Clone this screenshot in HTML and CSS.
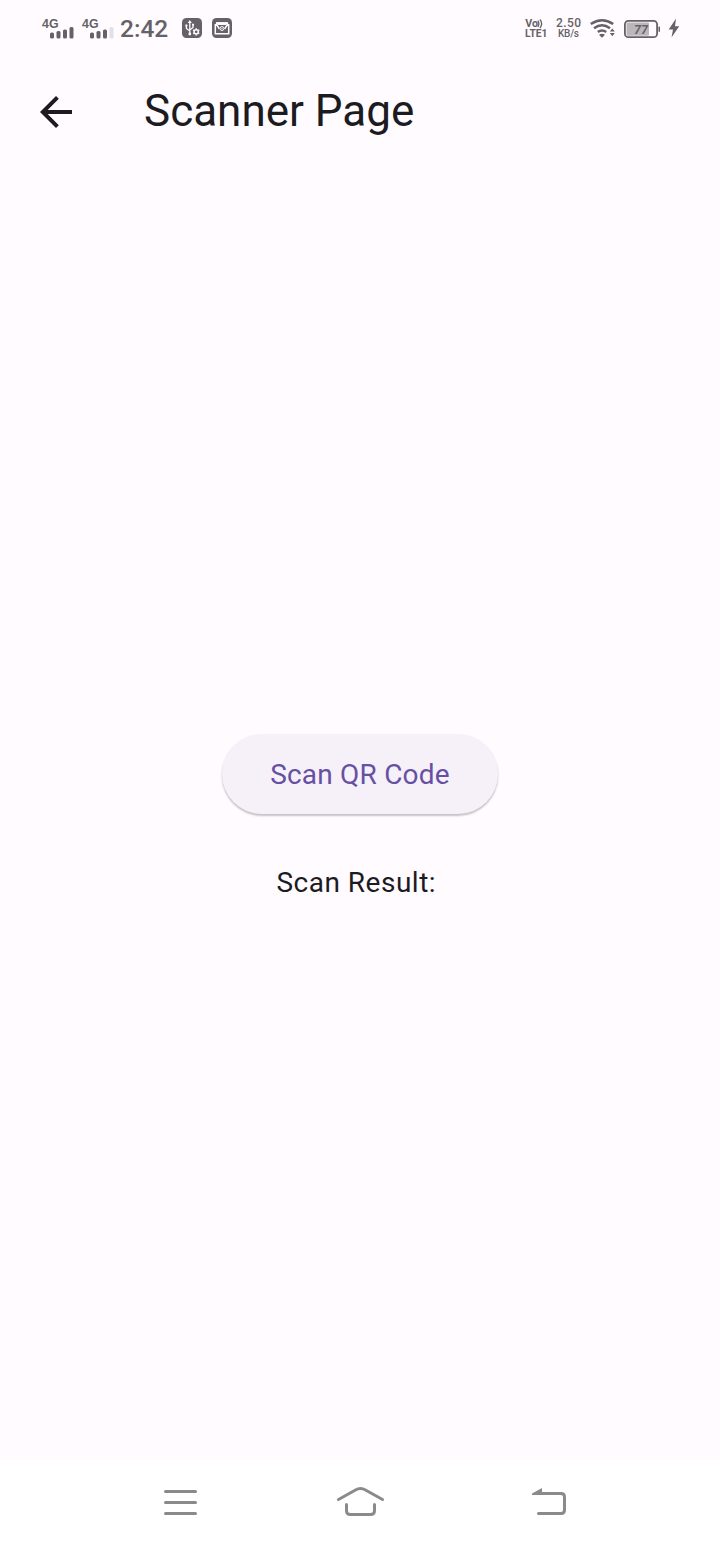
FILE: index.html
```html
<!DOCTYPE html>
<html lang="en">
<head>
<meta charset="utf-8">
<title>Scanner Page</title>
<link rel="stylesheet" href="styles.css">
</head>
<body>
<div class="screen">
  <header class="status">
    <div class="status-left">
      <svg class="signal" width="32" height="28" viewBox="42 14 32 28">
        <text class="net" x="42" y="28" textLength="16.500" lengthAdjust="spacingAndGlyphs">4G</text>
        <g class="fill"><rect x="50" y="32.500" width="4" height="6" rx="1.500"/><rect x="56.500" y="31" width="4" height="7.500" rx="1.500"/><rect x="63" y="29.500" width="4" height="9" rx="1.500"/><rect x="69.500" y="27" width="4" height="11.500" rx="1.500"/></g>
      </svg>
      <svg class="signal" width="32" height="28" viewBox="42 14 32 28">
        <text class="net" x="42" y="28" textLength="16.500" lengthAdjust="spacingAndGlyphs">4G</text>
        <g class="fill"><rect x="50" y="32.500" width="4" height="6" rx="1.500"/><rect x="56.500" y="31" width="4" height="7.500" rx="1.500"/><rect x="63" y="29.500" width="4" height="9" rx="1.500"/></g>
        <rect class="faint" x="69.500" y="27" width="4" height="11.500" rx="1.500"/>
      </svg>
      <span class="time">2:42</span>
      <svg class="usb" width="20" height="20" viewBox="0 0 20 20">
        <rect class="fill" width="20" height="20" rx="4.500"/>
        <path class="white-line usb-line" d="M7.800 15.500V4M4.400 8V10.500L7.800 13M11 7.500V9.500L7.800 12"/>
        <path class="white" d="M7.800 2L9.800 5H5.800ZM3.400 6.500h2v2h-2ZM10 5.800h2v2h-2Z"/>
        <circle class="white" cx="7.800" cy="16" r="1.400"/>
        <circle class="white-line" cx="14.200" cy="13.800" r="2.100"/>
        <path class="white-line" d="M14.200 10.200v1M14.200 16.400v1M11.100 12l.9.500M16.400 15.100l.9.500M11.100 15.600l.9-.5M16.400 12.500l.9-.5"/>
      </svg>
      <svg class="mail" width="20" height="20" viewBox="0 0 20 20">
        <rect class="fill" width="20" height="20" rx="4.500"/>
        <path class="white-line" d="M3.300 6V15.700H16.700V6M4 4.900H16M4 5.500L7.300 10.800M16 5.500L12.700 10.800"/>
        <path class="white" d="M4.500 4.200h11L14.300 7H5.700Z"/>
        <circle class="white-line thin" cx="10" cy="10.500" r="2"/>
        <circle class="white" cx="10" cy="10.500" r=".7"/>
      </svg>
    </div>
    <div class="status-right">
      <svg class="volte" width="24" height="24" viewBox="525 16 24 24">
        <text class="vo" x="525.300" y="27.300" textLength="12.800" lengthAdjust="spacingAndGlyphs">Vo</text>
        <path class="line" d="M537.900 20.500Q539.800 23.500 537.900 27M540 19.500Q543.200 23.500 540 28"/>
        <text class="lte" x="525" y="37.300" textLength="22.500" lengthAdjust="spacingAndGlyphs">LTE1</text>
      </svg>
      <svg class="speed" width="26" height="24" viewBox="555 16 26 24">
        <text class="rate" x="556" y="27.200" textLength="25">2.50</text>
        <text class="unit" x="558" y="37.300" textLength="21">KB/s</text>
      </svg>
      <svg class="wifi" width="26" height="22" viewBox="590 18 26 22">
        <path class="arc" d="M590.800 25Q602 17.300 613.200 25M594 29.200Q602 23.400 610 29.200M597.800 33Q602 30 606.200 33"/>
        <path class="fill" d="M599 35.700Q602 33.600 605 35.700L602 38.800ZM612.300 29.500L614.800 32.500H609.800ZM609.800 34H614.800L612.300 37.300Z"/>
      </svg>
      <svg class="battery" width="37" height="20" viewBox="624 19 37 20">
        <rect class="case" x="624.900" y="20.900" width="32.200" height="16.300" rx="3.500"/>
        <rect class="charge" x="626.500" y="22.500" width="22.500" height="13.200" rx="1"/>
        <rect class="fill" x="658.500" y="26.500" width="1.500" height="5.500" rx=".7"/>
        <text class="pct" x="634" y="33.700" textLength="14">77</text>
      </svg>
      <svg class="bolt" width="12" height="20" viewBox="0 0 12 20"><path class="fill" d="M8 .5L.7 11.500H5L3.500 19.500L11.200 8.300H7Z"/></svg>
    </div>
  </header>
  <div class="appbar">
    <svg class="back" width="32" height="32" viewBox="4 4 16 16"><path d="M20 11H7.830l5.590-5.590L12 4l-8 8 8 8 1.410-1.410L7.830 13H20v-2z"/></svg>
    <h1 class="title">Scanner Page</h1>
  </div>
  <main class="content">
    <button class="scan">Scan QR Code</button>
    <p class="result">Scan Result: </p>
  </main>
  <nav class="nav">
    <svg class="menu" width="34" height="28" viewBox="164 1488 34 28"><path d="M165.500 1491.500H195.500M165.500 1502.500H195.500M165.500 1513.500H195.500"/></svg>
    <svg class="home" width="48" height="32" viewBox="336 1485 48 32"><path d="M338.500 1499.500L355.500 1490Q360.500 1487.200 365.500 1490L382.500 1499.500M346.500 1504.500V1510.500Q346.500 1514.500 350.500 1514.500H370.500Q374.500 1514.500 374.500 1510.500V1504.500"/></svg>
    <svg class="return" width="36" height="30" viewBox="532 1487 36 30"><path d="M538 1493.500H561Q564.500 1493.500 564.500 1497V1510Q564.500 1513.500 561 1513.500H538.500"/><path class="tip" d="M532 1493.500L542 1488V1495H532.500Q531.500 1494.500 532 1493.500Z"/></svg>
  </nav>
</div>
</body>
</html>
```
FILE: styles.css
```css
body { margin: 0; font-family: Roboto, sans-serif; color: #1c1b1f; }
.screen { display: flex; flex-direction: column; height: 1544px; background: #fffbff; }
svg { display: block; flex: none; overflow: visible; }

.status { display: flex; justify-content: space-between; height: 56px; padding: 0 40px 0 42px; color: #656267; }
.status-left, .status-right { display: flex; align-items: center; }
.signal { margin-right: 8px; }
.time { width: 62px; margin-left: -2px; padding-top: 2px; font-size: 24.500px; line-height: 28px; font-weight: 500; }
.usb { margin-right: 10px; }
.fill { fill: #656267; }
.faint { fill: #e3dfe4; }
.net { font-family: "Liberation Sans", sans-serif; font-size: 13.500px; font-weight: 700; fill: #656267; }
.white { fill: #fffbff; }
.white-line { fill: none; stroke: #fffbff; stroke-width: 1.500; }
.usb-line { stroke-width: 1.300; }
.thin { stroke-width: 1; }
.vo { font-size: 11px; font-weight: 700; fill: #656267; }
.lte { font-size: 11px; font-weight: 700; fill: #656267; }
.line { fill: none; stroke: #656267; stroke-width: 1.300; }
.speed { margin: 0 9px 0 6px; }
.rate { font-size: 12px; font-weight: 500; fill: #656267; }
.unit { font-size: 10px; font-weight: 500; fill: #656267; }
.wifi { margin-right: 8px; }
.arc { fill: none; stroke: #656267; stroke-width: 2.500; }
.battery { margin-top: 2px; }
.case { fill: none; stroke: #656267; stroke-width: 1.800; }
.charge { fill: #bab7bb; }
.pct { font-size: 12.500px; font-weight: 700; font-style: italic; fill: #656267; }
.bolt { margin-left: 7px; }

.appbar { display: flex; align-items: center; height: 112px; padding-left: 40px; }
.back { fill: #1c1b1f; }
.title { margin: -2px 0 0 72px; font-size: 44px; line-height: 56px; font-weight: 400; }

.content { flex: 1; display: flex; flex-direction: column; align-items: center; justify-content: center; }
.scan { height: 80px; width: 276px; margin: 8px 0; padding: 2px 0 0; border: 0; border-radius: 40px; background: #f6f1f9; box-shadow: 0 2px 2px rgba(0, 0, 0, .2), 0 1px 3px rgba(0, 0, 0, .06); color: #6750a4; font: 400 28px/40px Roboto, sans-serif; letter-spacing: .2px; }
.result { margin: 40px 0 0; padding-top: 1px; margin-bottom: -1px; font-size: 28px; line-height: 40px; letter-spacing: .5px; white-space: pre; }

.nav { display: flex; align-items: center; height: 84px; padding-left: 164px; background: #fff; }
.nav path { fill: none; stroke: #8a8a8a; stroke-width: 3; stroke-linecap: round; }
.nav .tip { fill: #8a8a8a; stroke: none; }
.home { margin: -2px 148px 0 138px; }
```
